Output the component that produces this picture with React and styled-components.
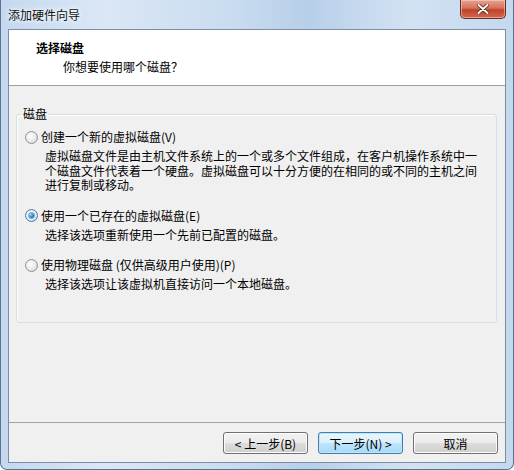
import styled, { createGlobalStyle } from "styled-components";

const Global = createGlobalStyle`
  html, body { margin: 0; padding: 0; }
  body {
    width: 514px;
    height: 470px;
    overflow: hidden;
    font-family: "Noto Sans CJK SC", "Liberation Sans", sans-serif;
    font-size: 12px;
    color: #000;
  }
`;

const Frame = styled.div`
  width: 514px;
  height: 470px;
  box-sizing: border-box;
  display: flex;
  flex-direction: column;
  background: linear-gradient(90deg, #c3d8ef 0%, #dbe7f5 20%, #c9dcf0 45%, #b8cfe9 60%, #d3e2f3 80%, #c4d8ee 100%);
  border-radius: 0 0 7px 7px;
  border: 1px solid #5d7491;
  border-top: none;
`;

const TitleBar = styled.div`
  height: 29px;
  flex: none;
  display: flex;
  align-items: flex-start;
  justify-content: space-between;
  padding-left: 7px;
`;

const Title = styled.span`
  margin-top: 7px;
  font-size: 12px;
  line-height: 16px;
  color: #111;
  text-shadow: 0 0 6px #fff, 0 0 4px #fff;
`;

const CloseButton = styled.div`
  width: 46px;
  height: 19px;
  margin-right: 7px;
  box-sizing: border-box;
  border: 1px solid #6d2a21;
  border-top: none;
  border-radius: 0 0 5px 5px;
  background: linear-gradient(#e8a493 0%, #d5705a 45%, #c24128 55%, #d06a4f 100%);
  box-shadow: inset 0 0 0 1px rgba(255, 220, 210, 0.5);
  display: flex;
  align-items: center;
  justify-content: center;
`;

const Client = styled.div`
  flex: 1;
  margin: 0 7px 6px 7px;
  border: 1px solid #7c8ea6;
  background: #f0f0f0;
  display: flex;
  flex-direction: column;
`;

const Header = styled.div`
  height: 56px;
  flex: none;
  background: #fff;
  border-bottom: 1px solid #a0a0a0;
  box-sizing: border-box;
  padding: 10px 0 0 27px;
`;

const HeaderTitle = styled.div`
  font-weight: bold;
  line-height: 16px;
`;

const HeaderSub = styled.div`
  padding-left: 27px;
  margin-top: 3px;
  line-height: 16px;
`;

const Body = styled.div`
  flex: 1;
  padding: 21px 8px 0 7px;
`;

const Group = styled.fieldset`
  margin: 0;
  padding: 8px 0 30px 8px;
  border: 1px solid #d5dfe5;
  border-radius: 3px;
  box-shadow: inset 1px 1px 0 #fff;
`;

const Legend = styled.legend`
  padding: 0 1px;
  margin-left: -3px;
  line-height: 14px;
`;

const Option = styled.div`
  margin-bottom: ${(p) => p.$gap}px;
`;

const OptionRow = styled.label`
  display: flex;
  align-items: center;
  gap: 3px;
  line-height: 16px;
`;

const Radio = styled.span`
  width: 13px;
  height: 13px;
  box-sizing: border-box;
  border-radius: 50%;
  border: 1px solid ${(p) => (p.$checked ? "#3c7fb1" : "#8f8f8f")};
  background: radial-gradient(circle at 40% 40%, #ffffff 0%, #e9e9e9 55%, #c9c9c9 100%);
  display: flex;
  align-items: center;
  justify-content: center;
  flex: none;
`;

const Dot = styled.span`
  width: 5px;
  height: 5px;
  border-radius: 50%;
  background: radial-gradient(circle at 35% 35%, #a9d6fb 0%, #1f74c7 60%, #0c4d96 100%);
  box-shadow: 0 0 0 1px #7ab6ea;
`;

const Desc = styled.div`
  padding-left: 20px;
  margin-top: 4px;
  line-height: 14.5px;
  width: 440px;
`;

const Footer = styled.div`
  height: 40px;
  flex: none;
  box-sizing: border-box;
  display: flex;
  justify-content: flex-end;
  align-items: flex-start;
  gap: 10px;
  border-top: 1px solid #a0a0a0;
  padding: 9px 7px 0 0;
`;

const Button = styled.button`
  width: 85px;
  height: 22px;
  box-sizing: border-box;
  font-family: inherit;
  font-size: 12px;
  color: #000;
  border-radius: 3px;
  border: 1px solid ${(p) => (p.$default ? "#3c7fb1" : "#707070")};
  background: ${(p) =>
    p.$default
      ? "linear-gradient(#eaf6fd 0%, #d9f0fc 50%, #bee6fd 51%, #a7d9f5 100%)"
      : "linear-gradient(#f2f2f2 0%, #ebebeb 50%, #dddddd 51%, #cfcfcf 100%)"};
  box-shadow: inset 0 0 0 1px ${(p) => (p.$default ? "#c5e3f7" : "#fcfcfc")};
  padding: 0;
  display: flex;
  align-items: center;
  justify-content: center;
`;

const options = [
  {
    label: "创建一个新的虚拟磁盘(V)",
    checked: false,
    gap: 15,
    desc: "虚拟磁盘文件是由主机文件系统上的一个或多个文件组成，在客户机操作系统中一个磁盘文件代表着一个硬盘。虚拟磁盘可以十分方便的在相同的或不同的主机之间进行复制或移动。",
  },
  {
    label: "使用一个已存在的虚拟磁盘(E)",
    checked: true,
    gap: 15,
    desc: "选择该选项重新使用一个先前已配置的磁盘。",
  },
  {
    label: "使用物理磁盘 (仅供高级用户使用)(P)",
    checked: false,
    gap: 0,
    desc: "选择该选项让该虚拟机直接访问一个本地磁盘。",
  },
];

export default function App() {
  return (
    <>
      <Global />
      <Frame>
        <TitleBar>
          <Title>添加硬件向导</Title>
          <CloseButton>
            <svg width="12" height="10" viewBox="0 0 12 10">
              <path d="M1.5 1 L10.5 9 M10.5 1 L1.5 9" stroke="#4a1a12" strokeWidth="3.4" strokeLinecap="round" />
              <path d="M1.5 1 L10.5 9 M10.5 1 L1.5 9" stroke="#fff" strokeWidth="2" strokeLinecap="round" />
            </svg>
          </CloseButton>
        </TitleBar>
        <Client>
          <Header>
            <HeaderTitle>选择磁盘</HeaderTitle>
            <HeaderSub>你想要使用哪个磁盘？</HeaderSub>
          </Header>
          <Body>
            <Group>
              <Legend>磁盘</Legend>
              {options.map((o) => (
                <Option key={o.label} $gap={o.gap}>
                  <OptionRow>
                    <Radio $checked={o.checked}>{o.checked && <Dot />}</Radio>
                    {o.label}
                  </OptionRow>
                  <Desc>{o.desc}</Desc>
                </Option>
              ))}
            </Group>
          </Body>
          <Footer>
            <Button>&lt; 上一步(B)</Button>
            <Button $default>下一步(N) &gt;</Button>
            <Button>取消</Button>
          </Footer>
        </Client>
      </Frame>
    </>
  );
}
